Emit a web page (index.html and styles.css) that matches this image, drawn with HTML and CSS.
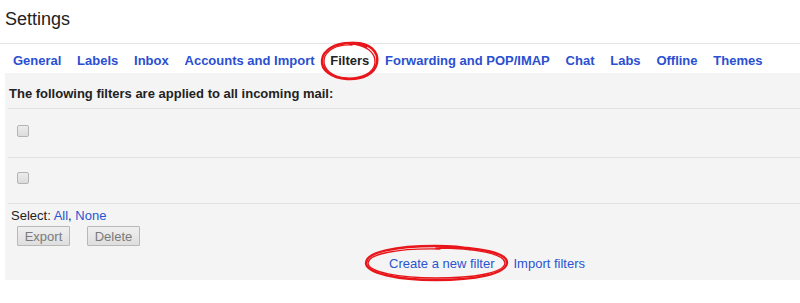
FILE: index.html
```html
<!DOCTYPE html>
<html>
<head>
<meta charset="utf-8">
<link rel="stylesheet" href="styles.css">
</head>
<body>
<div class="page">
  <h1 class="title">Settings</h1>
  <nav class="tabs">
    <a class="tab">General</a>
    <a class="tab">Labels</a>
    <a class="tab">Inbox</a>
    <a class="tab">Accounts and Import</a>
    <a class="tab active">Filters</a>
    <a class="tab">Forwarding and POP/IMAP</a>
    <a class="tab">Chat</a>
    <a class="tab">Labs</a>
    <a class="tab">Offline</a>
    <a class="tab">Themes</a>
  </nav>
  <div class="panel">
    <div class="intro">The following filters are applied to all incoming mail:</div>
    <div class="rules">
      <div class="rule rule-first"><input type="checkbox" class="cb"></div>
      <div class="rule rule-second"><input type="checkbox" class="cb"></div>
    </div>
    <div class="select">Select: <a class="link">All</a>, <a class="link">None</a></div>
    <div class="buttons">
      <button class="btn">Export</button>
      <button class="btn">Delete</button>
    </div>
    <div class="actions">
      <a class="link">Create a new filter</a>
      <a class="link">Import filters</a>
    </div>
  </div>
  <svg class="marks" width="800" height="303" viewBox="0 0 800 303">
    <g fill="none" stroke="#e8161b" stroke-linecap="round">
      <path d="M352 43 C370 42 379 52 377 63 C375 74 362 80 347 79 C331 78 321 70 322 60 C323 50 335 43 350 43 C358 43 364 45 366 47" stroke-width="2.4"/>
      <path d="M349 44 C366 44 376 53 375 63 C374 73 361 79 346 78 C332 77 323 69 324 60 C325 51 336 44 352 45" stroke-width="1.4"/>
      <path d="M440 247 C480 247 508 253 507 263 C506 274 475 280 436 280 C397 280 366 273 366 263 C366 252 396 246 436 246 C452 246 463 247 470 249" stroke-width="2.4"/>
      <path d="M436 248 C476 248 505 254 505 263 C504 273 474 278 436 278 C399 278 368 272 368 263 C368 254 398 248 440 249" stroke-width="1.4"/>
    </g>
  </svg>
</div>
</body>
</html>
```

FILE: styles.css
```css
* { box-sizing: border-box; }
html, body { margin: 0; padding: 0; background: #fff; }
body {
  font-family: "Liberation Sans", Arial, sans-serif;
  color: #222;
  width: 800px;
  height: 303px;
  overflow: hidden;
}
.page { position: relative; width: 800px; height: 303px; }
.title {
  margin: 0;
  height: 44px;
  padding: 8px 0 0 5px;
  font-size: 18px;
  font-weight: normal;
  line-height: 22px;
  color: #222;
  border-bottom: 1px solid #e5e5e5;
}
.tabs {
  display: flex;
  height: 29px;
  padding: 9px 0 0 5px;
}
.tab {
  font-size: 13px;
  font-weight: bold;
  line-height: 16px;
  padding: 0 7.9px;
  color: #2a4fd0;
}
.tab.active { color: #222; }
.panel {
  margin-left: 5px;
  height: 207px;
  background: #f4f4f4;
  padding-left: 3px;
}
.intro {
  font-size: 13px;
  font-weight: bold;
  line-height: 16px;
  padding: 13px 0 0 1px;
  height: 35px;
}
.rules { border-bottom: 1px solid #e2e2e2; }
.rule {
  border-top: 1px solid #e2e2e2;
  display: flex;
  align-items: flex-start;
}
.rule-first { height: 49px; padding-top: 16px; }
.rule-second { height: 46px; padding-top: 14px; }
.cb {
  appearance: none;
  -webkit-appearance: none;
  margin: 0 0 0 9px;
  width: 12px;
  height: 12px;
  border: 1px solid #b4b4b4;
  border-radius: 2px;
  background: linear-gradient(#ececec, #dcdcdc);
}
.select {
  font-size: 13px;
  line-height: 15px;
  padding: 4px 0 0 3px;
  color: #222;
}
.link { color: #2a55d0; }
.buttons {
  display: flex;
  gap: 17px;
  padding: 3px 0 0 9px;
}
.btn {
  width: 53px;
  height: 20px;
  padding: 0;
  font-family: "Liberation Sans", Arial, sans-serif;
  font-size: 13px;
  color: #7a7a7a;
  background: linear-gradient(#f0f0f0, #dedede);
  border: 1px solid #b8b8b8;
  border-radius: 1px;
}
.actions {
  display: flex;
  gap: 19px;
  padding: 10px 0 0 381px;
  font-size: 13px;
  line-height: 15px;
}
.marks {
  position: absolute;
  left: 0;
  top: 0;
  pointer-events: none;
}
```
